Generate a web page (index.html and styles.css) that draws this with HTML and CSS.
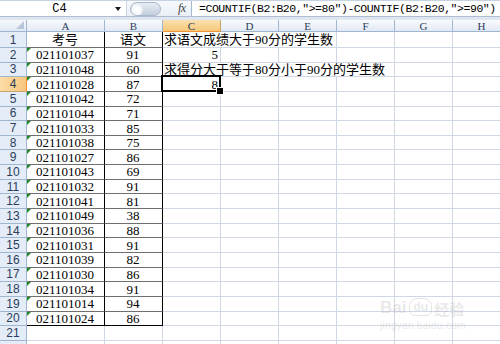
FILE: index.html
```html
<!DOCTYPE html>
<html>
<head>
<meta charset="utf-8">
<link rel="stylesheet" href="styles.css">
</head>
<body>
<div class="fbar">
  <div class="namebox"><span class="ref">C4</span><span class="arrow"></span></div>
  <div class="fbtns"><span class="oval"></span><span class="fx">fx</span></div>
  <div class="formula">=COUNTIF(B2:B20,″&gt;=80″)-COUNTIF(B2:B20,″&gt;=90″)</div>
</div>
<div class="strip"></div>
<div class="sheet">
  <div class="corner"><span class="ctri"></span></div>
  <div class="ch">A</div><div class="ch">B</div><div class="ch sel">C</div><div class="ch">D</div><div class="ch">E</div><div class="ch">F</div><div class="ch">G</div><div class="ch">H</div>

  <div class="rh">1</div><div class="c ta">考号</div><div class="c tb">语文</div><div class="c span3">求语文成绩大于90分的学生数</div><div class="c"></div><div class="c"></div><div class="c"></div>

  <div class="rh">2</div><div class="c ta tri">021101037</div><div class="c tb">91</div><div class="c num">5</div><div class="c"></div><div class="c"></div><div class="c"></div><div class="c"></div><div class="c"></div>

  <div class="rh">3</div><div class="c ta tri">021101048</div><div class="c tb">60</div><div class="c span4">求得分大于等于80分小于90分的学生数</div><div class="c"></div><div class="c"></div>

  <div class="rh sel">4</div><div class="c ta tri">021101028</div><div class="c tb">87</div><div class="c num active">8</div><div class="c"></div><div class="c"></div><div class="c"></div><div class="c"></div><div class="c"></div>

  <div class="rh">5</div><div class="c ta tri">021101042</div><div class="c tb">72</div><div class="c"></div><div class="c"></div><div class="c"></div><div class="c"></div><div class="c"></div><div class="c"></div>
  <div class="rh">6</div><div class="c ta tri">021101044</div><div class="c tb">71</div><div class="c"></div><div class="c"></div><div class="c"></div><div class="c"></div><div class="c"></div><div class="c"></div>
  <div class="rh">7</div><div class="c ta tri">021101033</div><div class="c tb">85</div><div class="c"></div><div class="c"></div><div class="c"></div><div class="c"></div><div class="c"></div><div class="c"></div>
  <div class="rh">8</div><div class="c ta tri">021101038</div><div class="c tb">75</div><div class="c"></div><div class="c"></div><div class="c"></div><div class="c"></div><div class="c"></div><div class="c"></div>
  <div class="rh">9</div><div class="c ta tri">021101027</div><div class="c tb">86</div><div class="c"></div><div class="c"></div><div class="c"></div><div class="c"></div><div class="c"></div><div class="c"></div>
  <div class="rh">10</div><div class="c ta tri">021101043</div><div class="c tb">69</div><div class="c"></div><div class="c"></div><div class="c"></div><div class="c"></div><div class="c"></div><div class="c"></div>
  <div class="rh">11</div><div class="c ta tri">021101032</div><div class="c tb">91</div><div class="c"></div><div class="c"></div><div class="c"></div><div class="c"></div><div class="c"></div><div class="c"></div>
  <div class="rh">12</div><div class="c ta tri">021101041</div><div class="c tb">81</div><div class="c"></div><div class="c"></div><div class="c"></div><div class="c"></div><div class="c"></div><div class="c"></div>
  <div class="rh">13</div><div class="c ta tri">021101049</div><div class="c tb">38</div><div class="c"></div><div class="c"></div><div class="c"></div><div class="c"></div><div class="c"></div><div class="c"></div>
  <div class="rh">14</div><div class="c ta tri">021101036</div><div class="c tb">88</div><div class="c"></div><div class="c"></div><div class="c"></div><div class="c"></div><div class="c"></div><div class="c"></div>
  <div class="rh">15</div><div class="c ta tri">021101031</div><div class="c tb">91</div><div class="c"></div><div class="c"></div><div class="c"></div><div class="c"></div><div class="c"></div><div class="c"></div>
  <div class="rh">16</div><div class="c ta tri">021101039</div><div class="c tb">82</div><div class="c"></div><div class="c"></div><div class="c"></div><div class="c"></div><div class="c"></div><div class="c"></div>
  <div class="rh">17</div><div class="c ta tri">021101030</div><div class="c tb">86</div><div class="c"></div><div class="c"></div><div class="c"></div><div class="c"></div><div class="c"></div><div class="c"></div>
  <div class="rh">18</div><div class="c ta tri">021101034</div><div class="c tb">91</div><div class="c"></div><div class="c"></div><div class="c"></div><div class="c"></div><div class="c"></div><div class="c"></div>
  <div class="rh">19</div><div class="c ta tri">021101014</div><div class="c tb">94</div><div class="c"></div><div class="c"></div><div class="c"></div><div class="c"></div><div class="c"></div><div class="c"></div>
  <div class="rh">20</div><div class="c ta tri last">021101024</div><div class="c tb last">86</div><div class="c"></div><div class="c"></div><div class="c"></div><div class="c"></div><div class="c"></div><div class="c"></div>
  <div class="rh">21</div><div class="c"></div><div class="c"></div><div class="c"></div><div class="c"></div><div class="c"></div><div class="c"></div><div class="c"></div><div class="c"></div>
  <div class="rh"></div><div class="c"></div><div class="c"></div><div class="c"></div><div class="c"></div><div class="c"></div><div class="c"></div><div class="c"></div><div class="c"></div>
</div>
<div class="wm">
  <div class="wm-top"><span class="wm-bai">Bai</span><span class="wm-du">du</span><span class="wm-jy">经验</span></div>
  <div class="wm-url">jingyan.baidu.com</div>
</div>
</body>
</html>
```
FILE: styles.css
```css
* { box-sizing: border-box; }
html, body { margin: 0; padding: 0; }
body {
  width: 500px;
  height: 344px;
  overflow: hidden;
  background: #fff;
  position: relative;
  font-family: "Liberation Serif", "Noto Sans CJK SC", serif;
  color: #000;
}

/* formula bar */
.fbar {
  display: flex;
  height: 16px;
  background: #fff;
  border-top: 1px solid #c5d2e2;
}
.namebox {
  width: 126px;
  display: flex;
  align-items: center;
  background: #fff;
}
.namebox .ref {
  flex: 1;
  text-align: center;
  font: 12px "Liberation Mono", monospace;
  padding-left: 4px;
}
.namebox .arrow {
  width: 0;
  height: 0;
  margin: 0 5px 0 0;
  border-left: 3px solid transparent;
  border-right: 3px solid transparent;
  border-top: 4px solid #1a1a1a;
}
.fbtns {
  width: 65px;
  display: flex;
  align-items: center;
  background: linear-gradient(#f7f9fc, #eaeff6);
  border-left: 1px solid #c8d4e3;
}
.oval {
  width: 31px;
  height: 14px;
  margin-left: 3px;
  border-radius: 8px;
  border: 1px solid #a9b8ca;
  background: radial-gradient(circle at 6px 7px, #ffffff 0, #f4f7fa 5px, transparent 6px),
              linear-gradient(#e6ecf3, #c3cfdd);
}
.fx {
  margin-left: 17px;
  font: italic 12px "Liberation Serif", serif;
  color: #444;
  letter-spacing: -0.5px;
}
.formula {
  flex: 1;
  display: flex;
  align-items: center;
  padding-left: 7px;
  border-left: 1px solid #a9b9cd;
  font: 11.5px "Liberation Mono", monospace;
  letter-spacing: -0.45px;
  white-space: nowrap;
  overflow: hidden;
}
.strip {
  height: 4px;
  background: #dfe6f0;
  border-top: 1px solid #aebdd1;
}

/* sheet */
.sheet {
  display: grid;
  grid-template-columns: 27px 78px repeat(7, 58px);
  grid-template-rows: 12px 16px repeat(21, 14.65px);
}
.corner {
  background: linear-gradient(#f6f9fc, #e1e9f4);
  border-right: 1px solid #9eb6ce;
  border-bottom: 1px solid #9eb6ce;
  position: relative;
}
.ctri {
  position: absolute;
  right: 2px;
  bottom: 2px;
  width: 0;
  height: 0;
  border-left: 8px solid transparent;
  border-bottom: 8px solid #b7c6d9;
}
.ch {
  display: flex;
  align-items: center;
  justify-content: center;
  background: linear-gradient(#f9fbfd, #e2e9f4);
  border-right: 1px solid #9eb6ce;
  border-bottom: 1px solid #9eb6ce;
  font: 11px "Liberation Serif", serif;
  color: #2c3c58;
}
.ch.sel {
  background: linear-gradient(#fbe0b0, #f6c878);
  border-bottom-color: #f29436;
  border-right-color: #c9a46a;
}
.rh {
  display: flex;
  align-items: center;
  justify-content: center;
  background: #e4ecf7;
  border-right: 1px solid #9eb6ce;
  border-bottom: 1px solid #9eb6ce;
  font: 12px "Liberation Sans", sans-serif;
  color: #2a3e5c;
}
.rh.sel {
  background: linear-gradient(90deg, #fbdca5, #f7c77f);
  border-right-color: #f29436;
  border-bottom-color: #c9a46a;
}
.c {
  display: flex;
  align-items: center;
  padding: 0 2px 0 1px;
  border-right: 1px solid #d0d7e5;
  border-bottom: 1px solid #d0d7e5;
  font-size: 13px;
  white-space: nowrap;
  line-height: 1;
  position: relative;
}
.ta, .tb {
  justify-content: center;
  border-right-color: #000;
  border-bottom-color: #6f6f6f;
}
.last { border-bottom-color: #000; }
.tri::before {
  content: "";
  position: absolute;
  top: 0;
  left: 0;
  width: 0;
  height: 0;
  border-top: 4px solid #1f8a27;
  border-right: 4px solid transparent;
}
.num { justify-content: flex-end; }
.span3 { grid-column: span 3; }
.span4 { grid-column: span 4; }
.active::after {
  content: "";
  position: absolute;
  top: -2px;
  left: -2px;
  right: -1px;
  bottom: -1px;
  border: 2px solid #000;
}
.active::before {
  content: "";
  position: absolute;
  right: -4px;
  bottom: -4px;
  width: 6px;
  height: 6px;
  background: #000;
  border: 1px solid #fff;
  z-index: 2;
}

/* watermark */
.wm {
  position: absolute;
  left: 380px;
  top: 288px;
  color: rgba(180, 180, 180, 0.3);
  pointer-events: none;
}
.wm-top {
  display: flex;
  align-items: flex-end;
  height: 28px;
}
.wm-bai {
  font: bold 17px "Liberation Sans", sans-serif;
  line-height: 1;
}
.wm-du {
  font: bold 12px "Liberation Sans", sans-serif;
  line-height: 1;
  margin: 0 2px 0 3px;
  padding: 2px 3px;
  border-radius: 8px 8px 6px 6px;
  border: 1px solid rgba(170, 170, 170, 0.3);
}
.wm-jy {
  font: bold 15px "Noto Sans CJK SC", sans-serif;
  line-height: 1;
}
.wm-url {
  font: 10px "Liberation Sans", sans-serif;
  margin-top: 4px;
  letter-spacing: 0.3px;
}
```
